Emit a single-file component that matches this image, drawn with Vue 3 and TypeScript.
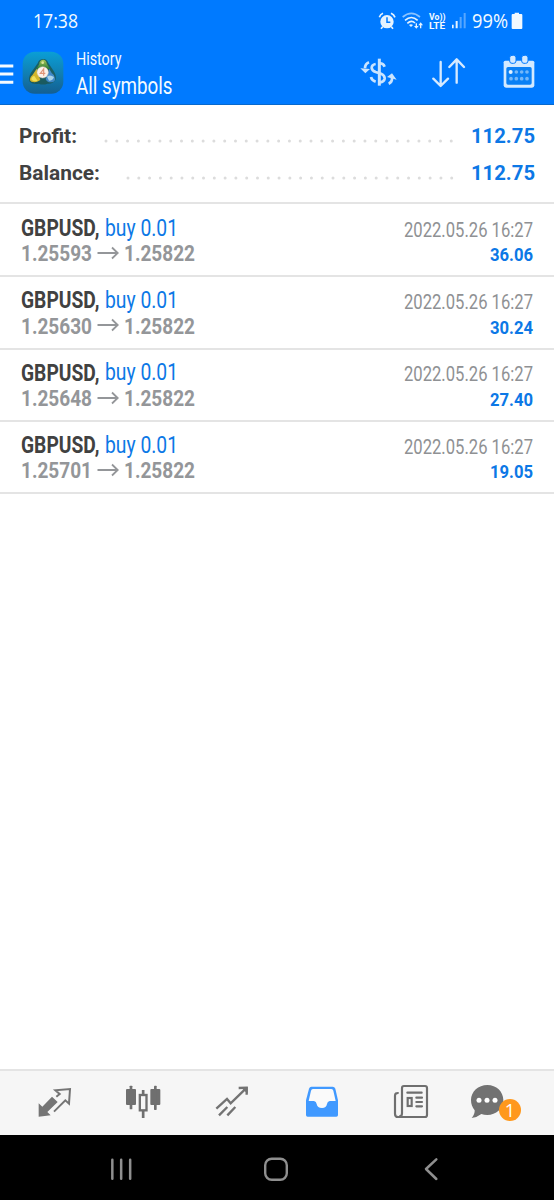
<script setup lang="ts">
import { defineComponent, h } from 'vue'

// Single line of text fitted to a given width; the bottom of its box is the baseline.
const FitText = defineComponent({
  props: {
    text: { type: String, required: true },
    width: { type: Number, required: true },
    size: { type: Number, required: true },
  },
  setup(props) {
    return () =>
      h('svg', { width: props.width, height: props.size, overflow: 'visible' }, [
        h(
          'text',
          {
            x: 0,
            y: props.size,
            'font-size': props.size,
            textLength: props.width,
            lengthAdjust: 'spacingAndGlyphs',
          },
          props.text,
        ),
      ])
  },
})

interface Summary {
  label: string
  labelWidth: number
  dots: number
  value: string
}

interface Deal {
  open: string
  close: string
  time: string
  profit: string
}

const summary: Summary[] = [
  { label: 'Profit:', labelWidth: 58, dots: 33, value: '112.75' },
  { label: 'Balance:', labelWidth: 81, dots: 31, value: '112.75' },
]

const deals: Deal[] = [
  { open: '1.25593', close: '1.25822', time: '2022.05.26 16:27', profit: '36.06' },
  { open: '1.25630', close: '1.25822', time: '2022.05.26 16:27', profit: '30.24' },
  { open: '1.25648', close: '1.25822', time: '2022.05.26 16:27', profit: '27.40' },
  { open: '1.25701', close: '1.25822', time: '2022.05.26 16:27', profit: '19.05' },
]
</script>

<template>
  <div class="screen">
    <header class="header">
      <div class="status">
        <FitText class="clock" text="17:38" :width="45" :size="19.5" />
        <div class="status-icons">
          <svg class="s-alarm" width="18" height="18" viewBox="84 35 54 54">
            <circle cx="111" cy="64" r="20" fill="#e6f3ff" />
            <path d="M111 51V66H121" fill="none" stroke="#007aff" stroke-width="4.5" />
            <path d="M88 51Q91 42 99 39M123 39Q132 43 135 51M98 79L93 85M124 79L129 85" fill="none" stroke="#e6f3ff" stroke-width="5" />
          </svg>
          <svg class="s-wifi" width="22" height="18" viewBox="158 35 66 54">
            <g fill="none" stroke="#e6f3ff" stroke-width="5">
              <path d="M160 50Q186 28 212 50" opacity=".6" />
              <path d="M167 60Q186 43 205 60M174 69Q186 58 197 68" />
              <path d="M201 69V81M214 84V71" stroke-width="4" />
            </g>
            <path d="M194 77H208L201 85ZM207 75H221L214 66ZM179 74Q185 69 191 74L185 80Z" fill="#e6f3ff" />
          </svg>
          <div class="volte">
            <FitText text="Vo))" :width="16.5" :size="9.6" />
            <FitText text="LTE" :width="16" :size="9.6" />
          </div>
          <svg class="s-signal" width="16" height="18" viewBox="300 35 48 54" fill="#e6f3ff">
            <path d="M303 73h5v11h-5zM314 62h6v22h-6z" />
            <path d="M326 50h6v34h-6zM338 38h6v46h-6z" opacity=".38" />
          </svg>
          <FitText class="percent" text="99%" :width="36" :size="20.5" />
          <svg class="s-battery" width="12" height="18" viewBox="484 35 36 54" fill="#f2f9ff">
            <path d="M495 37H508V41H515Q518 41 518 44V83Q518 86 515 86H489Q486 86 486 83V44Q486 41 489 41H495Z" />
          </svg>
        </div>
      </div>

      <div class="toolbar">
        <svg class="menu" width="14" height="22" viewBox="0 0 14 22" fill="#f4faff">
          <path d="M0 1.500h13.300v3H0zM0 9.500h13.300v3H0zM0 17.700h13.300v3H0z" />
        </svg>
        <svg class="app-icon" width="42" height="43" viewBox="67 154 126 129">
          <defs>
            <linearGradient id="tile" x1="0" y1="0" x2="0" y2="1">
              <stop offset="0" stop-color="#0a9fd6" />
              <stop offset=".55" stop-color="#117db0" />
              <stop offset="1" stop-color="#145f91" />
            </linearGradient>
            <linearGradient id="leaf" x1="0" y1="0" x2="0" y2="1">
              <stop offset="0" stop-color="#a8c958" />
              <stop offset="1" stop-color="#287a36" />
            </linearGradient>
          </defs>
          <rect x="69" y="156" width="122" height="126" rx="36" fill="url(#tile)" />
          <path d="M129 178Q141 176 146 190L160 211Q171 226 168 240Q159 254 143 252Q129 257 118 252Q100 255 90 246Q85 234 94 219L114 191Q117 179 129 178Z" fill="#1d5348" opacity=".75" />
          <path d="M130 180C138 179 141 187 142 193L151 208L110 208L119 193C119 187 122 181 130 180Z" fill="url(#leaf)" />
          <path d="M111 207L122 241Q113 249 100 247Q90 246 91 238Q92 230 99 225Z" fill="#d3b62b" />
          <path d="M95 239Q96 230 104 229L114 244Q99 247 95 239Z" fill="#efe05a" />
          <path d="M149 208L138 238Q142 249 155 248Q168 247 166 236Q165 225 156 220Z" fill="#4088c8" />
          <path d="M142 231Q151 223 163 232Q160 243 148 243Z" fill="#a9d2e8" />
          <circle cx="129" cy="218" r="17" fill="#fbf1e9" stroke="#d2c9bb" stroke-width="1.500" />
          <path d="M132 228V208L122 221H137" fill="none" stroke="#df9476" stroke-width="3.500" />
          <circle cx="129" cy="189" r="4" fill="#d9e698" />
        </svg>
        <div class="titles">
          <FitText text="History" :width="45.5" :size="17.8" />
          <FitText class="subtitle" text="All symbols" :width="96.5" :size="23.3" />
        </div>
        <div class="actions">
          <svg class="a-dollar" width="38" height="32" viewBox="31 172 114 96" fill="none" stroke="#c9e4ff" stroke-width="8">
            <path d="M89 177V258" stroke-width="9" />
            <path d="M105 201Q101 191 91 191M78 193Q66 195 66 205Q67 213 78 217L94 222Q106 228 105 237Q103 247 91 248M78 246Q66 242 64 232" />
            <path d="M58 188Q46 193 46 206M117 252Q128 247 127 235" />
            <path d="M32 206L61 208L47 221ZM112 232L127 221L141 240Z" fill="#c9e4ff" stroke="none" />
          </svg>
          <svg class="a-sort" width="34" height="32" viewBox="246 172 102 96" fill="none" stroke="#d6eaff" stroke-width="7" stroke-linecap="round" stroke-linejoin="round">
            <path d="M272 187V258M250 237L272 259L294 237M320 249V180M298 202L320 179L342 202" />
          </svg>
          <svg class="a-calendar" width="32" height="34" viewBox="458 166 96 102">
            <path d="M465 183H547Q552 183 552 188V257Q552 264 545 264H467Q460 264 460 257V188Q460 183 465 183Z" fill="#d3e9ff" />
            <rect x="468" y="202" width="76" height="53" rx="5" fill="#0a80f5" />
            <g fill="#d3e9ff" stroke="#007aff" stroke-width="3">
              <rect x="478" y="167" width="19" height="24" rx="7" />
              <rect x="514" y="167" width="19" height="24" rx="7" />
            </g>
            <circle cx="481" cy="217" r="6" fill="#e4f2ff" />
            <g fill="#75b7f8">
              <circle cx="498" cy="217" r="5.500" /><circle cx="514" cy="217" r="5.500" /><circle cx="530" cy="217" r="5.500" />
              <circle cx="482" cy="237" r="5.500" /><circle cx="498" cy="237" r="5.500" /><circle cx="514" cy="237" r="5.500" /><circle cx="530" cy="237" r="5.500" />
            </g>
          </svg>
        </div>
      </div>
    </header>

    <section class="summary">
      <div v-for="item in summary" :key="item.label" class="summary-row">
        <FitText class="label" :text="item.label" :width="item.labelWidth" :size="20.3" />
        <svg class="dots" :width="(item.dots - 1) * 10.79 + 4" height="4">
          <circle v-for="n in item.dots" :key="n" :cx="2 + (n - 1) * 10.79" cy="2" r="1.5" />
        </svg>
        <FitText class="value" :text="item.value" :width="64" :size="20.3" />
      </div>
    </section>

    <main class="deals">
      <article v-for="deal in deals" :key="deal.open" class="deal">
        <div class="line">
          <FitText class="symbol" text="GBPUSD," :width="78.5" :size="23.2" />
          <FitText class="side" text="buy 0.01" :width="73" :size="23.4" />
          <FitText class="time" :text="deal.time" :width="129" :size="19.7" />
        </div>
        <div class="line second">
          <FitText class="price" :text="deal.open" :width="71" :size="22.9" />
          <svg class="arrow" width="23" height="14" viewBox="0 0 23 14">
            <path d="M.5 7H20.500M15 1.500L20.700 7L15 12.500" />
          </svg>
          <FitText class="price" :text="deal.close" :width="71" :size="22.9" />
          <FitText class="profit" :text="deal.profit" :width="43" :size="19.2" />
        </div>
      </article>
    </main>

    <nav class="tabs">
      <svg class="t-trade" width="36" height="32" viewBox="112 82 108 96">
        <path d="M117 131L128 141L157 111L174 127L143 157L153 167L117 171Z" fill="#757575" />
        <path d="M170 111L180 103L167 92L211 88L208 132L197 122L163 156" fill="none" stroke="#757575" stroke-width="6" />
      </svg>
      <svg class="t-candles" width="36" height="36" viewBox="376 72 108 108">
        <g fill="#6f6f6f">
          <rect x="379" y="87" width="30" height="48" rx="3" /><rect x="390" y="77" width="8" height="71" rx="2" />
          <rect x="452" y="87" width="30" height="48" rx="3" /><rect x="463" y="77" width="8" height="73" rx="2" />
          <path d="M426.500 90h8v12h-8zM426.500 153h8v21h-8z" />
        </g>
        <rect x="420.500" y="105" width="20" height="46" fill="#f6f6f6" stroke="#6f6f6f" stroke-width="7" />
      </svg>
      <svg class="t-trend" width="34" height="34" viewBox="646 76 102 102" fill="none" stroke="#737373" stroke-width="7">
        <path d="M650 147L682 118L693 131L739 86M658 167L683 142M683 167L707 142" />
        <path d="M717 85L741 84L741 105" />
        <path d="M722 82H744V102Z" fill="#737373" stroke="none" />
      </svg>
      <svg class="t-inbox" width="34" height="32" viewBox="92 78 102 96">
        <path d="M111 80H175Q181 80 183 86L191 121V165Q191 170 186 170H100Q95 170 95 165V121L104 86Q106 80 111 80Z" fill="#4099ff" />
        <path d="M116 87H171Q176 87 177 92L184 123H166Q159 125 158 132Q156 144 143 144Q129 144 127 132Q126 125 119 123H103L110 92Q111 87 116 87Z" fill="#fafafa" />
      </svg>
      <svg class="t-news" width="36" height="36" viewBox="357 72 108 108" fill="none" stroke="#6f6f6f" stroke-width="6.500">
        <path d="M374 99Q363 98 363 107V161Q363 171 372 171H453Q459 171 459 165V84Q459 78 453 78H390Q384 78 384 84V160Q384 170 375 170" />
        <path d="M400 98H443M427 113H444M427 126H444M427 139H444" stroke-linecap="round" />
        <rect x="401" y="114" width="12" height="24" />
      </svg>
      <div class="chat">
        <svg width="38" height="36" viewBox="590 72 114 108">
          <path d="M642 75C669 75 690 95 690 120C690 146 668 165 642 165Q632 165 624 162Q610 173 595 174Q605 162 604 151C597 142 593 132 593 120C593 95 615 75 642 75Z" fill="#727272" />
          <g fill="#fff"><circle cx="617" cy="121" r="7.500" /><circle cx="641" cy="121" r="7.500" /><circle cx="665" cy="121" r="7.500" /></g>
        </svg>
        <span class="badge">1</span>
      </div>
    </nav>

    <footer class="system">
      <svg class="k-recent" width="24" height="26" viewBox="328 288 72 78" stroke="#8f8f8f" stroke-width="7.500" stroke-linecap="round">
        <path d="M338 299V356M364.500 299V356M391.500 299V356" />
      </svg>
      <svg class="k-home" width="26" height="26" viewBox="0 0 26 26" fill="none" stroke="#8f8f8f" stroke-width="2.400">
        <rect x="2.200" y="2.700" width="21.600" height="21" rx="6.500" />
      </svg>
      <svg class="k-back" width="16" height="26" viewBox="448 288 48 78" fill="none" stroke="#8f8f8f" stroke-width="7.500" stroke-linecap="round" stroke-linejoin="round">
        <path d="M488 298L457 327L488 357" />
      </svg>
    </footer>
  </div>
</template>

<style>
body {
  margin: 0;
}
</style>

<style scoped>
.screen {
  width: 554px;
  height: 1200px;
  display: flex;
  flex-direction: column;
  background: #fff;
  font-family: 'Roboto', 'Liberation Sans', sans-serif;
  overflow: hidden;
}

svg {
  display: block;
  flex: none;
}

.header {
  box-sizing: border-box;
  height: 105px;
  background: #007aff;
  border-bottom: 1px solid #0869cd;
  fill: #f4faff;
}

.status {
  height: 40px;
  display: flex;
  align-items: flex-start;
  justify-content: space-between;
  padding: 0 31px 0 33px;
  font-family: 'Open Sans', 'Noto Sans', sans-serif;
}

.clock {
  margin-top: 8px;
}

.status-icons {
  display: flex;
  align-items: flex-start;
  padding-top: 11.500px;
}

.s-wifi {
  margin-left: 6px;
}

.volte {
  display: flex;
  flex-direction: column;
  margin: -2px 5.500px 0 4.500px;
  font-family: 'Roboto', sans-serif;
  font-weight: 700;
}

.percent {
  margin: -4.500px 3.300px 0 5px;
}

.toolbar {
  height: 64px;
  display: flex;
  align-items: flex-start;
}

.menu {
  margin-top: 23px;
}

.app-icon {
  margin: 11.300px 0 0 8px;
}

.titles {
  margin: 6.500px 0 0 11.800px;
}

.subtitle {
  margin-top: 6.600px;
}

.actions {
  display: flex;
  align-items: flex-start;
  margin-left: auto;
  padding: 16px 19.500px 0 0;
}

.a-dollar {
  margin-top: 1.300px;
}

.a-sort {
  margin: 1.300px 0 0 33.700px;
}

.a-calendar {
  margin: -.7px 0 0 36.500px;
}

.summary {
  box-sizing: border-box;
  height: 99px;
  padding: 17.500px 19px 0;
  border-bottom: 2px solid #e4e4e4;
  font-weight: 700;
}

.summary-row {
  height: 37px;
  display: flex;
  align-items: flex-start;
}

.label {
  fill: #414141;
}

.dots {
  margin: 16px 17.500px 0 auto;
  fill: #dcdcdc;
}

.value {
  fill: #0c78e6;
}

.deals {
  padding-top: 1px;
}

.deal {
  box-sizing: border-box;
  height: 72.350px;
  padding: 8.300px 21px 0 21px;
  border-bottom: 2px solid #e4e4e4;
}

.line {
  display: flex;
  align-items: flex-end;
  height: 22.800px;
}

.second {
  height: 25.100px;
}

.symbol {
  fill: #414141;
  font-weight: 700;
}

.side {
  margin-left: 5.500px;
  fill: #0c78e6;
}

.time {
  margin: 0 0 -.2px auto;
  fill: #8f9194;
}

.price {
  fill: #949699;
  font-weight: 700;
}

.arrow {
  margin: 0 3.500px 1.200px 5px;
  fill: none;
  stroke: #949699;
  stroke-width: 1.800px;
}

.profit {
  margin: 0 0 -.3px auto;
  fill: #0c78e6;
  font-weight: 700;
}

.tabs {
  box-sizing: border-box;
  height: 66px;
  margin-top: auto;
  display: flex;
  align-items: flex-start;
  padding: 14px 0 0 37.300px;
  background: #f6f6f6;
  border-top: 2px solid #e4e4e4;
}

.t-trade {
  margin-top: 2px;
}

.t-candles {
  margin: -1.300px 0 0 52px;
}

.t-trend {
  margin-left: 54px;
}

.t-inbox {
  margin: .7px 0 0 55.400px;
}

.t-news {
  margin: -1.300px 0 0 54.300px;
}

.chat {
  position: relative;
  margin: -1.300px 0 0 41.500px;
}

.badge {
  position: absolute;
  left: 28.500px;
  top: 15px;
  width: 22px;
  height: 22px;
  border-radius: 50%;
  background: #ff981c;
  color: #fff;
  font: 18px/22px 'Open Sans', 'Noto Sans', sans-serif;
  text-align: center;
}

.system {
  height: 65px;
  display: flex;
  align-items: flex-start;
  background: #000;
}

.k-recent {
  margin: 21px 0 0 109.300px;
}

.k-home {
  margin: 21px 0 0 130px;
}

.k-back {
  margin: 21px 0 0 134px;
}
</style>
